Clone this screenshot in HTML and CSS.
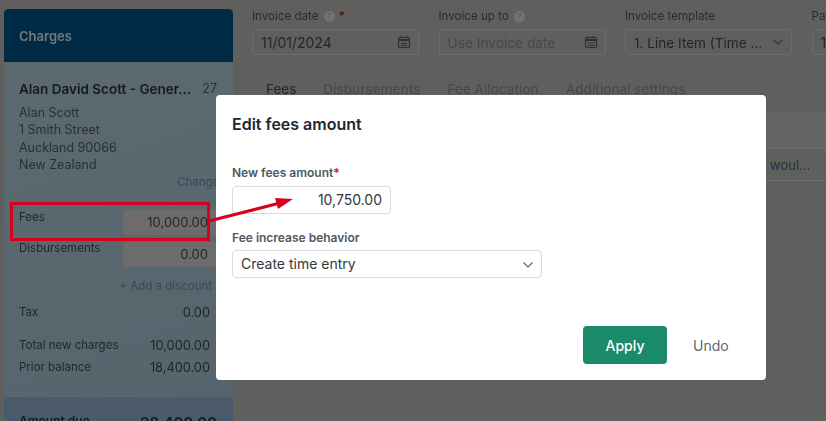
FILE: index.html
```html
<!DOCTYPE html>
<html lang="en">
<head>
    <meta charset="UTF-8">
    <title>Edit fees amount</title>
    <link rel="stylesheet" href="styles.css">
</head>
<body>
    <div class="page">
        <aside class="charges">
            <div class="charges-head">Charges</div>
            <div class="charges-body">
                <div class="client-row">
                    <span class="client-name">Alan David Scott - Gener...</span>
                    <span class="client-num">27</span>
                </div>
                <div class="address">
                    <div>Alan Scott</div>
                    <div>1 Smith Street</div>
                    <div>Auckland 90066</div>
                    <div>New Zealand</div>
                </div>
                <div class="change-link">Change</div>
                <div class="input-row fees-row">
                    <span>Fees</span>
                    <div class="amount-box">10,000.00</div>
                </div>
                <div class="input-row">
                    <span>Disbursements</span>
                    <div class="amount-box">0.00</div>
                </div>
                <div class="discount-link">+ Add a discount</div>
                <div class="sum-row tax-row"><span>Tax</span><b>0.00</b></div>
                <div class="sum-row total-row"><span>Total new charges</span><b>10,000.00</b></div>
                <div class="sum-row prior-row"><span>Prior balance</span><b>18,400.00</b></div>
            </div>
            <div class="amount-due"><span>Amount due</span><span class="due-value">28,400.00</span></div>
        </aside>
        <main class="content">
            <div class="fields">
                <div class="field">
                    <label>Invoice date <i class="help">?</i> <em>*</em></label>
                    <div class="box">11/01/2024
                        <svg class="cal" viewBox="0 0 14 14" fill="none" stroke="#2e3133" stroke-width="1.2"><rect x="1.5" y="2.5" width="11" height="10" rx="1.5"/><path d="M1.5 4.5h11M1.5 5.5h11M4.5 1v2M9.5 1v2M4 8.5h6M4 10.5h6"/></svg>
                    </div>
                </div>
                <div class="field">
                    <label>Invoice up to <i class="help">?</i></label>
                    <div class="box placeholder">Use Invoice date
                        <svg class="cal" viewBox="0 0 14 14" fill="none" stroke="#2e3133" stroke-width="1.2"><rect x="1.5" y="2.5" width="11" height="10" rx="1.5"/><path d="M1.5 4.5h11M1.5 5.5h11M4.5 1v2M9.5 1v2M3.5 8h7M3.5 10.5h7"/></svg>
                    </div>
                </div>
                <div class="field">
                    <label>Invoice template</label>
                    <div class="box select-box">1. Line Item (Time ...
                        <svg class="chev" viewBox="0 0 12 8" fill="none" stroke="#33383b" stroke-width="1.2"><path d="M1.5 1.5 6 6l4.5-4.5"/></svg>
                    </div>
                </div>
                <div class="field">
                    <label>Pay</label>
                    <div class="box">1</div>
                </div>
            </div>
            <nav class="tabs">
                <span class="tab active">Fees</span>
                <span class="tab">Disbursements</span>
                <span class="tab">Fee Allocation</span>
                <span class="tab">Additional settings</span>
            </nav>
            <div class="table-head"></div>
            <div class="table-row">woul...</div>
        </main>
    </div>

    <div class="dialog-wrap">
        <div class="dialog">
            <h2 class="dialog-title">Edit fees amount</h2>
            <label class="form-label">New fees amount<em>*</em></label>
            <div class="form-input">10,750.00</div>
            <label class="form-label second">Fee increase behavior</label>
            <div class="form-select">Create time entry
                <svg class="chev" viewBox="0 0 12 8" fill="none" stroke="#5a6672" stroke-width="1.2"><path d="M1.5 1.5 6 6l4.5-4.5"/></svg>
            </div>
            <div class="dialog-actions">
                <button class="btn-apply">Apply</button>
                <button class="btn-undo">Undo</button>
            </div>
        </div>
    </div>

    <div class="callout-box"></div>
    <svg class="callout-arrow" viewBox="0 0 826 421">
        <path d="M209 221 280 203" stroke="#d7001c" stroke-width="3" fill="none"/>
        <path d="M293 199 275 198 278 209Z" fill="#d7001c"/>
    </svg>
</body>
</html>
```

FILE: styles.css
```css
* { box-sizing: border-box; }
html, body { margin: 0; height: 100%; }
body { position: relative; width: 826px; height: 421px; overflow: hidden; background: #5f5f5d; font-family: Inter, "Liberation Sans", sans-serif; font-size: 13px; color: #232628; }

.page { display: flex; height: 421px; filter: blur(0.4px); }

.charges { flex: 0 0 229px; margin: 9px 0 0 4px; background: linear-gradient(160deg, #5c6a70, #56656d); border-radius: 4px 4px 0 0; overflow: hidden; display: flex; flex-direction: column; }
.charges-head { flex: 0 0 53px; padding: 0 15px; display: flex; align-items: center; background: #002b47; color: #74797c; font-size: 13px; font-weight: 600; border-radius: 4px 4px 0 0; }
.charges-body { flex: 1; padding: 18px 16px 0 15px; font-size: 12.5px; }

.client-row { display: flex; justify-content: space-between; align-items: center; height: 17px; white-space: nowrap; }
.client-name { font-weight: 600; font-size: 13.5px; color: #17191a; }
.client-num { color: #2b2f31; }
.address { margin-top: 7px; line-height: 17.3px; color: #2b2f31; }
.change-link { margin-top: 1px; height: 17px; line-height: 17px; margin-right: -15px; padding-left: 158px; color: #33495a; font-size: 11.5px; white-space: nowrap; }

.input-row { display: flex; justify-content: space-between; align-items: flex-start; margin-right: -16px; font-size: 11.5px; color: #232628; }
.input-row span { margin-top: -1px; }
.fees-row { margin-top: 19px; }
.fees-row span { margin-top: 0; }
.input-row + .input-row { margin-top: 7px; }
.amount-box { width: 110px; height: 25px; padding: 0 25px 0 0; line-height: 25px; text-align: right; font-size: 13px; background: #6b6c6b; border-radius: 3px; color: #252729; }

.discount-link { margin-top: 11px; margin-right: 5px; line-height: 16px; text-align: right; color: #34495c; font-size: 11.5px; }

.sum-row { display: flex; justify-content: space-between; margin-right: 7px; font-size: 11.5px; line-height: 16px; }
.sum-row b { font-weight: 400; font-size: 12.8px; line-height: 18px; color: #1f2224; }
.tax-row { margin-top: 10px; }
.total-row { margin-top: 15px; }
.prior-row { margin-top: 4px; }

.amount-due { flex: 0 0 24px; min-height: 0; padding: 16px 16px 0 15px; display: flex; justify-content: space-between; align-items: flex-start; background: #4a5a6b; font-size: 12px; font-weight: 600; color: #17191a; white-space: nowrap; }
.due-value { font-size: 15px; }

.content { flex: 1; min-width: 0; padding: 9px 0 0 19px; overflow: hidden; }
.fields { display: flex; gap: 19.5px; }
.field { flex: 0 0 167px; }
.field label { display: flex; align-items: center; gap: 5px; height: 14px; font-size: 11.6px; color: #2a2c2d; white-space: nowrap; }
.field em { color: #5a0f12; font-style: normal; font-weight: 700; margin-left: -1px; }
.help { width: 11px; height: 11px; border-radius: 50%; background: #737372; color: #5f5f5d; font-size: 8px; font-style: normal; font-weight: 700; line-height: 11px; text-align: center; }
.box { position: relative; margin-top: 6px; height: 26px; padding-left: 8px; line-height: 26px; font-size: 14px; border: 1px solid #6c6c6a; border-radius: 3px; color: #232628; white-space: nowrap; }
.placeholder { color: #3e4a52; font-size: 13.7px; }
.select-box { font-size: 13.6px; }
.cal { position: absolute; right: 7px; top: 5px; width: 14px; height: 14px; }
.box .chev { position: absolute; right: 7px; top: 8px; width: 12px; height: 8px; }

.tabs { display: flex; gap: 27px; margin: 26px 0 0 14px; height: 16px; font-size: 13.5px; font-weight: 500; line-height: 16px; white-space: nowrap; color: #444c52; }
.tab.active { color: #232628; font-weight: 400; }

.table-head { margin-top: 15px; height: 37px; background: #646463; border-bottom: 1px solid #6c6c6b; }
.table-row { height: 32px; padding-left: 518px; line-height: 32px; font-size: 13px; color: #1f3243; border-bottom: 1px solid #6c6c6b; white-space: nowrap; }

.dialog-wrap { position: absolute; inset: 0; padding: 95px 60px 41px 216px; }
.dialog { position: relative; height: 285px; padding: 20px 16px 16px; background: #fff; border-radius: 4px; display: flex; flex-direction: column; align-items: flex-start; }
.dialog-title { margin: 0; font-size: 16px; font-weight: 600; line-height: 18px; color: #22262a; }
.form-label { margin-top: 33px; font-size: 12px; font-weight: 600; line-height: 14px; color: #4d5864; }
.form-label em { color: #c9202f; font-style: normal; }
.form-label.second { margin-top: 17px; }
.form-input { margin-top: 6px; width: 159px; height: 28px; padding-right: 8px; line-height: 26px; text-align: right; font-size: 14px; color: #33383d; border: 1px solid #d4dbe1; border-radius: 4px; }
.form-select { position: relative; margin-top: 5px; width: 310px; height: 28px; padding-left: 8px; line-height: 26px; font-size: 14px; color: #33383d; border: 1px solid #d4dbe1; border-radius: 4px; }
.form-select .chev { position: absolute; right: 7px; top: 10px; width: 12px; height: 8px; }
.dialog-actions { position: absolute; right: 38px; bottom: 16px; display: flex; align-items: center; gap: 26px; }
.btn-apply { width: 84px; height: 38px; border: 0; border-radius: 4px; background: #1b8a6b; color: #fff; font: 500 14px Inter, "Liberation Sans", sans-serif; }
.btn-undo { width: 35px; padding: 0; border: 0; background: none; color: #5d6875; font: 400 14px Inter, "Liberation Sans", sans-serif; }

.callout-box { position: absolute; left: 10px; top: 202px; width: 200px; height: 39px; border: 3px solid #d7001c; }
.callout-arrow { position: absolute; left: 0; top: 0; width: 826px; height: 421px; }
```
